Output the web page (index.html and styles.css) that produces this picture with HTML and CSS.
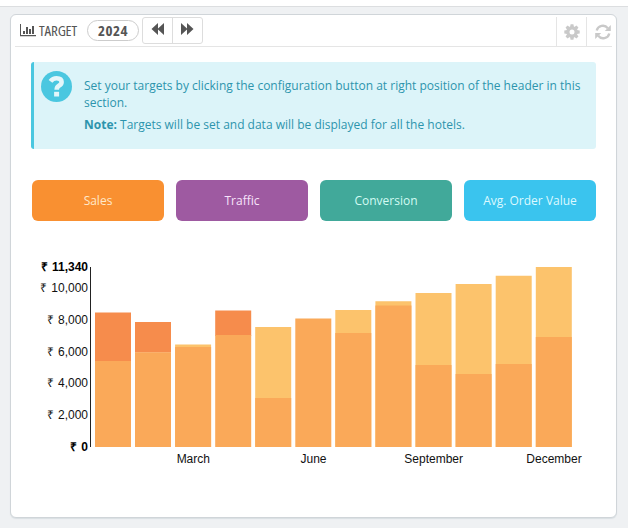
FILE: index.html
```html
<!DOCTYPE html>
<html lang="en">
<head>
<meta charset="utf-8">
<title>Target</title>
<link rel="stylesheet" href="styles.css">
</head>
<body>
<div class="topbar"></div>
<main class="panel">
  <header class="head">
    <svg class="chart-icon" width="16" height="13" viewBox="0 0 16 13" fill="#555"><path d="M0 0h1v11h15v1.3H0zM3 7h2v3H3zM6 3h2v7H6zM9 5h2v5H9zM12 2h2v8h-2z"/></svg>
    <span class="title">TARGET</span>
    <span class="year">2024</span>
    <div class="pager">
      <button aria-label="Previous year"><svg width="14" height="12" viewBox="0 0 14 12" fill="#555"><path d="M7 0v12L0.5 6zM13 0v12L6.5 6z"/></svg></button>
      <button aria-label="Next year"><svg width="14" height="12" viewBox="0 0 14 12" fill="#555"><path d="M0 0v12L6.5 6zM6 0v12L12.500 6z"/></svg></button>
    </div>
    <div class="tools">
      <button aria-label="Configure"><svg width="16" height="16" viewBox="0 0 16 16"><g fill="#c9c9c9"><path id="tooth" d="M6.6 .3h2.800l.6 3H6z"/><use href="#tooth" transform="rotate(45 8 8)"/><use href="#tooth" transform="rotate(90 8 8)"/><use href="#tooth" transform="rotate(135 8 8)"/><use href="#tooth" transform="rotate(180 8 8)"/><use href="#tooth" transform="rotate(225 8 8)"/><use href="#tooth" transform="rotate(270 8 8)"/><use href="#tooth" transform="rotate(315 8 8)"/></g><circle cx="8" cy="8" r="4.1" fill="none" stroke="#c9c9c9" stroke-width="3.200"/></svg></button>
      <button aria-label="Refresh"><svg width="16" height="16" viewBox="0 0 16 16"><path d="M1.700 6.600A6.300 6.300 0 0 1 12.800 4.200M14.300 9.400A6.300 6.300 0 0 1 3.200 11.800" fill="none" stroke="#c9c9c9" stroke-width="2.300"/><path d="M15.800 1v6H9.800zM.2 15V9h6z" fill="#c9c9c9"/></svg></button>
    </div>
  </header>
  <section class="notice">
    <svg class="help" width="31" height="31" viewBox="0 0 31 31"><circle cx="15.500" cy="15.500" r="15.500" fill="#4ac7e0"/><path d="M9.500 10.400Q11.800 7.200 15.600 7.200Q20.600 7.200 20.600 11Q20.600 13.200 18.200 14.600Q15.700 16 15.700 18.800" fill="none" stroke="#e4f6fa" stroke-width="4.600"/><path d="M13.100 20.800h5v4.700h-5z" fill="#e4f6fa"/></svg>
    <div class="copy">
      <p>Set your targets by clicking the configuration button at right position of the header in this section.</p>
      <p><b>Note:</b> Targets will be set and data will be displayed for all the hotels.</p>
    </div>
  </section>
  <nav class="tabs">
    <button class="tab sales">Sales</button>
    <button class="tab traffic">Traffic</button>
    <button class="tab conversion">Conversion</button>
    <button class="tab order">Avg. Order Value</button>
  </nav>
  <svg class="chart" width="565" height="225" viewBox="31 250 565 225">
    <g class="light">
      <path d="M175.100 344.500h36V447h-36zM255.200 327h36V447h-36zM335.300 310h36V447h-36zM375.400 301.300h36V447h-36zM415.500 293h36V447h-36zM455.600 284h36V447h-36zM495.700 275.700h36V447h-36zM535.800 267h36V447h-36z"/>
    </g>
    <g class="deep">
      <path d="M95 312.500h36V361H95zM135 322h36v30.500h-36zM215.200 310.500h36V336h-36z"/>
    </g>
    <g class="base">
      <path d="M95 361h36v86H95zM135 352.200h36V447h-36zM175.100 347h36v100h-36zM215.200 335h36v112h-36zM255.200 398h36v49h-36zM295.300 318.500h36V447h-36zM335.300 333h36v114h-36zM375.400 305.500h36V447h-36zM415.500 365h36v82h-36zM455.600 374h36v73h-36zM495.700 364h36v83h-36zM535.800 337h36v110h-36z"/>
    </g>
    <path class="axis" d="M90.500 267V447"/>
    <g class="labels y">
      <text class="strong" x="88" y="271"><tspan>₹</tspan><tspan dx="1"> 11,340</tspan></text>
      <text x="88" y="292"><tspan>₹</tspan><tspan dx="1"> 10,000</tspan></text>
      <text x="88" y="324"><tspan>₹</tspan><tspan dx="1"> 8,000</tspan></text>
      <text x="88" y="356"><tspan>₹</tspan><tspan dx="1"> 6,000</tspan></text>
      <text x="88" y="387"><tspan>₹</tspan><tspan dx="1"> 4,000</tspan></text>
      <text x="88" y="419"><tspan>₹</tspan><tspan dx="1"> 2,000</tspan></text>
      <text class="strong" x="88" y="451"><tspan>₹</tspan><tspan dx="1"> 0</tspan></text>
    </g>
    <g class="labels x">
      <text x="193.300" y="463">March</text>
      <text x="313.500" y="463">June</text>
      <text x="433.700" y="463">September</text>
      <text x="554" y="463">December</text>
    </g>
  </svg>
</main>
</body>
</html>
```
FILE: styles.css
```css
* { box-sizing: border-box; }
body { margin: 0; height: 528px; overflow: hidden; background: #eff1f3; font: 12px "Open Sans", sans-serif; }
button { margin: 0; padding: 0; border: 0; background: none; font: inherit; }
.topbar { height: 7px; background: #fff; border-bottom: 1px solid #dcdee0; }
.panel { width: 607px; height: 504px; margin: 7px 0 0 10px; padding: 2px 4px; background: #fff; border: 1px solid #d0d5d9; border-radius: 6px; box-shadow: 0 1px 1px #d9dfe3; }
.head { display: flex; height: 30px; border-bottom: 1px solid #e5e5e5; color: #555; }
.chart-icon { margin: 7px 3px 0 5px; flex: none; }
.title { width: 40px; font-size: 15px; line-height: 26px; font-stretch: 75%; letter-spacing: -.15px; white-space: nowrap; }
.year { width: 52px; height: 21px; margin: 3px 3px 0 8px; border: 1px solid #ccc; border-radius: 11px; font-size: 15px; font-weight: 700; font-stretch: 75%; letter-spacing: .5px; line-height: 18px; text-align: center; }
.pager { display: flex; width: 61px; height: 27px; border: 1px solid #ddd; border-radius: 3px; }
.pager button { display: flex; flex: 1; align-items: center; justify-content: center; padding-bottom: 3px; }
.pager button + button { border-left: 1px solid #ddd; }
.tools { display: flex; margin-left: auto; }
.tools button { display: flex; width: 30px; justify-content: center; padding: 7px 0 0 1px; border-left: 1px solid #e5e5e5; }
.tools button:last-child { width: 26px; padding-left: 7px; }
.notice { display: flex; width: 565px; height: 87px; margin: 15px 0 0 16px; padding: 9px 7px; background: #dcf4f9; border-left: 3px solid #4ac7e0; border-radius: 3px; color: #2d94ad; }
.help { flex: none; }
.copy { margin-left: 12px; padding-top: 6px; line-height: 17px; }
.copy p { margin: 0 0 5px; }
.tabs { display: grid; grid-template-columns: repeat(4, 1fr); gap: 12px; width: 564px; margin: 31px 0 0 17px; }
.tab { height: 41px; border-radius: 6px; font-size: 12px; }
.sales { background: #f99031; color: #ffe8c9; }
.traffic { background: #9e5aa1; color: #f7e3fa; }
.conversion { background: #41a99a; color: #d3fbf3; }
.order { background: #3ac4ee; color: #dcf9ff; }
.chart { display: block; margin: 29px 0 0 16px; }
.light { fill: #fcc36c; }
.deep { fill: #f68c4c; }
.base { fill: #faa959; }
.axis { stroke: #222; stroke-width: 1; fill: none; }
.labels { font: 12px "Liberation Sans", sans-serif; fill: #111; }
.y { text-anchor: end; }
.x { text-anchor: middle; }
.strong { font-weight: 700; fill: #000; }
```
